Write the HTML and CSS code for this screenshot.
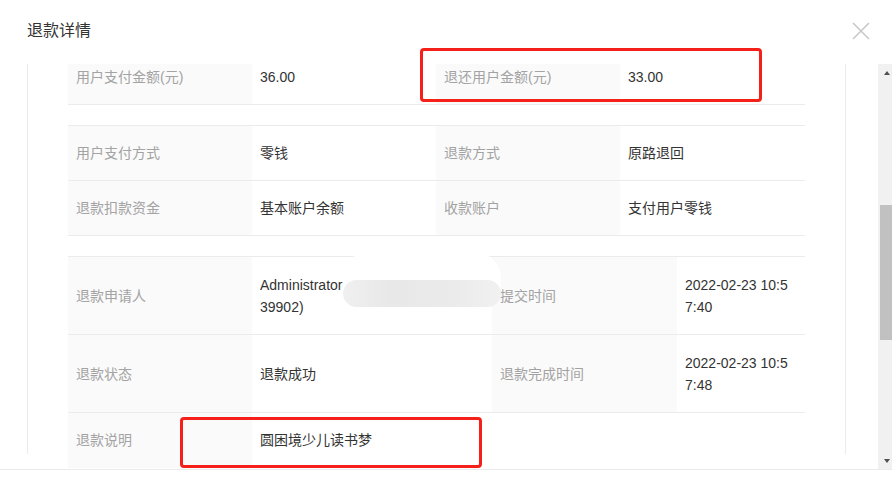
FILE: index.html
```html
<!DOCTYPE html>
<html lang="zh-CN">
<head>
<meta charset="utf-8">
<title>退款详情</title>
<link rel="stylesheet" href="styles.css">
</head>
<body>
<div class="modal">
  <div class="header">
    <div class="title">退款详情</div>
    <svg class="close" width="18" height="18" viewBox="0 0 18 18"><path d="M1 1L17 17M17 1L1 17" stroke="#c8c8c8" stroke-width="1.6" fill="none"/></svg>
  </div>
  <div class="body">
    <div class="scroll-area">
      <div class="panel">
        <div class="content">
          <div class="table t4">
            <div class="cell label">用户支付金额(元)</div>
            <div class="cell value">36.00</div>
            <div class="cell label">退还用户金额(元)</div>
            <div class="cell value">33.00</div>
          </div>
          <div class="table t4">
            <div class="cell label">用户支付方式</div>
            <div class="cell value">零钱</div>
            <div class="cell label">退款方式</div>
            <div class="cell value">原路退回</div>
            <div class="cell label">退款扣款资金</div>
            <div class="cell value">基本账户余额</div>
            <div class="cell label">收款账户</div>
            <div class="cell value">支付用户零钱</div>
          </div>
          <div class="table t3">
            <div class="cell label tall">退款申请人</div>
            <div class="cell value tall">Administrator<br>39902)</div>
            <div class="cell label tall">提交时间</div>
            <div class="cell value tall narrow">2022-02-23 10:57:40</div>
            <div class="cell label tall">退款状态</div>
            <div class="cell value tall">退款成功</div>
            <div class="cell label tall">退款完成时间</div>
            <div class="cell value tall narrow">2022-02-23 10:57:48</div>
            <div class="cell label last">退款说明</div>
            <div class="cell value span3 last">圆困境少儿读书梦</div>
          </div>
        </div>
      </div>
    </div>
    <div class="scrollbar">
      <div class="sb-btn"><span class="arrow up"></span></div>
      <div class="sb-track"><div class="sb-thumb"></div></div>
      <div class="sb-btn"><span class="arrow down"></span></div>
    </div>
  </div>
  <div class="footer"></div>
  <div class="redact"><div class="redact-gray"></div></div>
  <div class="mark mark-amount"></div>
  <div class="mark mark-note"></div>
</div>
</body>
</html>
```
FILE: styles.css
```css
* { box-sizing: border-box; }
html, body { margin: 0; padding: 0; background: #fff; }
body {
  font-family: "Liberation Sans", "Noto Sans CJK SC", sans-serif;
  font-size: 14px;
  color: #333;
}
.modal {
  position: relative;
  width: 892px;
  height: 482px;
  overflow: hidden;
  background: #fff;
}
.header {
  height: 64px;
  display: flex;
  align-items: center;
  justify-content: space-between;
  padding: 0 22px 4px 27px;
}
.title {
  font-size: 16px;
  color: #333;
  line-height: 22px;
  margin-top: 2px;
}
.close { display: block; margin-top: 1px; }
.body {
  height: 405px;
  display: flex;
}
.scroll-area {
  flex: 1;
  overflow: hidden;
}
.panel {
  margin: 0 32px 0 27px;
  height: 100%;
  border-left: 1px solid #ebebeb;
  border-right: 1px solid #ebebeb;
  padding: 0 40px;
}
.content {
  margin-top: -15px;
  display: flex;
  flex-direction: column;
  gap: 20px;
}
.table {
  display: grid;
  border-top: 1px solid #ebebeb;
}
.t4 { grid-template-columns: 184px 184px 184px 185px; }
.t3 { grid-template-columns: 184px 240px 185px 128px; }
.cell {
  display: flex;
  align-items: center;
  min-height: 55px;
  padding: 16px 8px;
  line-height: 22px;
  border-bottom: 1px solid #ebebeb;
}
.cell.tall { min-height: 78px; }
.cell.last { min-height: 55px; padding: 16px 8px 17px; border-bottom: none; }
.label { background: #fafafa; color: #a3a3a3; }
.value { background: #fff; color: #333; }
.narrow { word-break: break-all; padding-right: 12px; }
.span3 { grid-column: span 3; }
.scrollbar {
  width: 14px;
  background: #f1f1f1;
  display: flex;
  flex-direction: column;
}
.sb-btn {
  height: 17px;
  display: flex;
  align-items: center;
  justify-content: center;
  padding-left: 3px;
}
.arrow {
  width: 0; height: 0;
  border-left: 3.5px solid transparent;
  border-right: 3.5px solid transparent;
}
.arrow.up { border-bottom: 4px solid #505050; }
.arrow.down { border-top: 4px solid #505050; }
.sb-track { flex: 1; padding-left: 2px; }
.sb-thumb {
  margin-top: 124px;
  height: 135px;
  background: #c1c1c1;
}
.footer {
  height: 13px;
  border-top: 1px solid #ebebeb;
}
.redact {
  position: absolute;
  left: 345px;
  top: 252px;
  width: 156px;
  height: 56px;
  border-radius: 22px 26px 24px 22px;
  background: #fff;
}
.redact-gray {
  position: absolute;
  left: -2px;
  right: 0;
  bottom: 1px;
  height: 27px;
  border-radius: 14px;
  background: linear-gradient(to right, #f0f0f0, #e8e8e8 30%, #ebebeb 70%, #f1f1f1);
}
.mark {
  position: absolute;
  border: 3px solid #f5201a;
  border-radius: 4px;
}
.mark-amount { left: 420px; top: 48px; width: 342px; height: 54px; }
.mark-note { left: 180px; top: 417px; width: 302px; height: 51px; }
```
